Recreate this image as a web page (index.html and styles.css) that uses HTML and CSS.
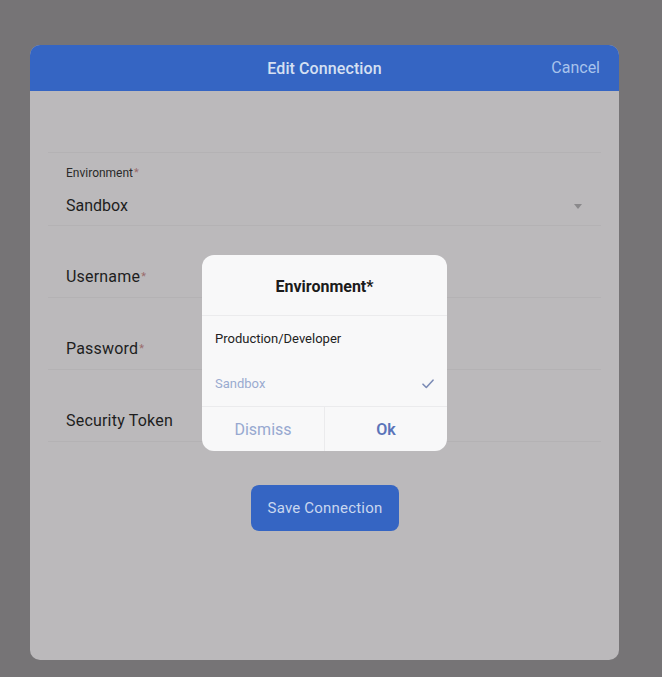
FILE: index.html
```html
<!DOCTYPE html>
<html>
<head>
<meta charset="utf-8">
<link rel="stylesheet" href="styles.css">
</head>
<body>
<div class="page">
  <div class="card">
    <div class="header">
      <span class="title">Edit Connection</span>
      <span class="cancel">Cancel</span>
    </div>
    <div class="form">
      <div class="field env">
        <div class="small-label">Environment<span class="req">*</span></div>
        <div class="select-row">
          <span class="value">Sandbox</span>
          <svg class="caret" width="8" height="5" viewBox="0 0 8 5"><path d="M0 0 L8 0 L4 5 Z" fill="#8a898b"/></svg>
        </div>
      </div>
      <div class="field"><div class="label">Username<span class="req">*</span></div></div>
      <div class="field"><div class="label">Password<span class="req">*</span></div></div>
      <div class="field"><div class="label">Security Token</div></div>
      <div class="actions">
        <button class="save">Save Connection</button>
      </div>
    </div>
  </div>
  <div class="dialog">
    <div class="dlg-title">Environment*</div>
    <div class="option">Production/Developer</div>
    <div class="option selected">
      <span>Sandbox</span>
      <svg width="12" height="10" viewBox="0 0 12 10"><path d="M1 5.2 L4.3 8.5 L11 1.2" fill="none" stroke="#7c8cb6" stroke-width="1.6" stroke-linecap="round" stroke-linejoin="round"/></svg>
    </div>
    <div class="dlg-buttons">
      <div class="dlg-btn dismiss">Dismiss</div>
      <div class="dlg-btn ok">Ok</div>
    </div>
  </div>
</div>
</body>
</html>
```

FILE: styles.css
```css
html, body {
  margin: 0;
  padding: 0;
  background: #767476;
  font-family: Roboto, "Liberation Sans", sans-serif;
}
.page {
  position: relative;
  width: 662px;
  height: 677px;
  padding: 45px 43px 17px 30px;
  box-sizing: border-box;
}
.card {
  height: 615px;
  background: #bbb9bb;
  border-radius: 10px;
  overflow: hidden;
}
.header {
  height: 46px;
  background: #3565c3;
  display: flex;
  align-items: center;
  justify-content: center;
  position: relative;
}
.title {
  color: #d6e0f2;
  font-size: 16px;
  font-weight: 500;
  letter-spacing: 0.1px;
}
.cancel {
  position: absolute;
  right: 19px;
  top: 13px;
  color: #a8c3ec;
  font-size: 16px;
}
.form {
  padding: 61px 18px 0 18px;
}
.field {
  border-bottom: 1px solid #b4b2b4;
  padding: 41px 0 10px 18px;
  height: 20px;
}
.field.env {
  border-top: 1px solid #b4b2b4;
  height: auto;
  padding: 12px 0 9px 18px;
}
.small-label {
  font-size: 12px;
  color: #2a2a2a;
  line-height: 16px;
}
.select-row {
  display: flex;
  align-items: center;
  justify-content: space-between;
  margin-top: 15px;
  padding-right: 19px;
}
.value {
  font-size: 16px;
  color: #1e1e1e;
  line-height: 20px;
}
.label {
  font-size: 16px;
  color: #1e1e1e;
  line-height: 20px;
  letter-spacing: 0.2px;
}
.req {
  color: #9a6c6c;
  font-size: 11px;
  vertical-align: top;
  margin-left: 1px;
}
.actions {
  display: flex;
  justify-content: center;
  padding-top: 43px;
}
.save {
  width: 148px;
  height: 46px;
  border: none;
  border-radius: 8px;
  background: #3565c3;
  color: #c9d7ef;
  font-family: Roboto, "Liberation Sans", sans-serif;
  font-size: 15px;
  letter-spacing: 0.2px;
  margin-left: 1px;
}
.dialog {
  position: absolute;
  left: 202px;
  top: 255px;
  width: 245px;
  height: 196px;
  background: #f8f8f9;
  border-radius: 12px;
  overflow: hidden;
  display: flex;
  flex-direction: column;
}
.dlg-title {
  height: 61px;
  display: flex;
  align-items: center;
  justify-content: center;
  font-size: 16px;
  font-weight: 700;
  color: #1b1b1b;
  border-bottom: 1px solid #ebebed;
  box-sizing: border-box;
  padding-top: 2px;
}
.option {
  height: 45px;
  display: flex;
  align-items: center;
  justify-content: space-between;
  padding: 0 13px;
  font-size: 13px;
  color: #222;
}
.option.selected {
  color: #9aabd0;
  border-bottom: 1px solid #ebebed;
}
.dlg-buttons {
  flex: 1;
  display: flex;
}
.dlg-btn {
  flex: 1;
  display: flex;
  align-items: center;
  justify-content: center;
  font-size: 16px;
}
.dismiss {
  color: #97a8d0;
  border-right: 1px solid #ebebed;
  flex: 0 0 122px;
}
.ok {
  color: #5b74b9;
  font-weight: 600;
}
```
